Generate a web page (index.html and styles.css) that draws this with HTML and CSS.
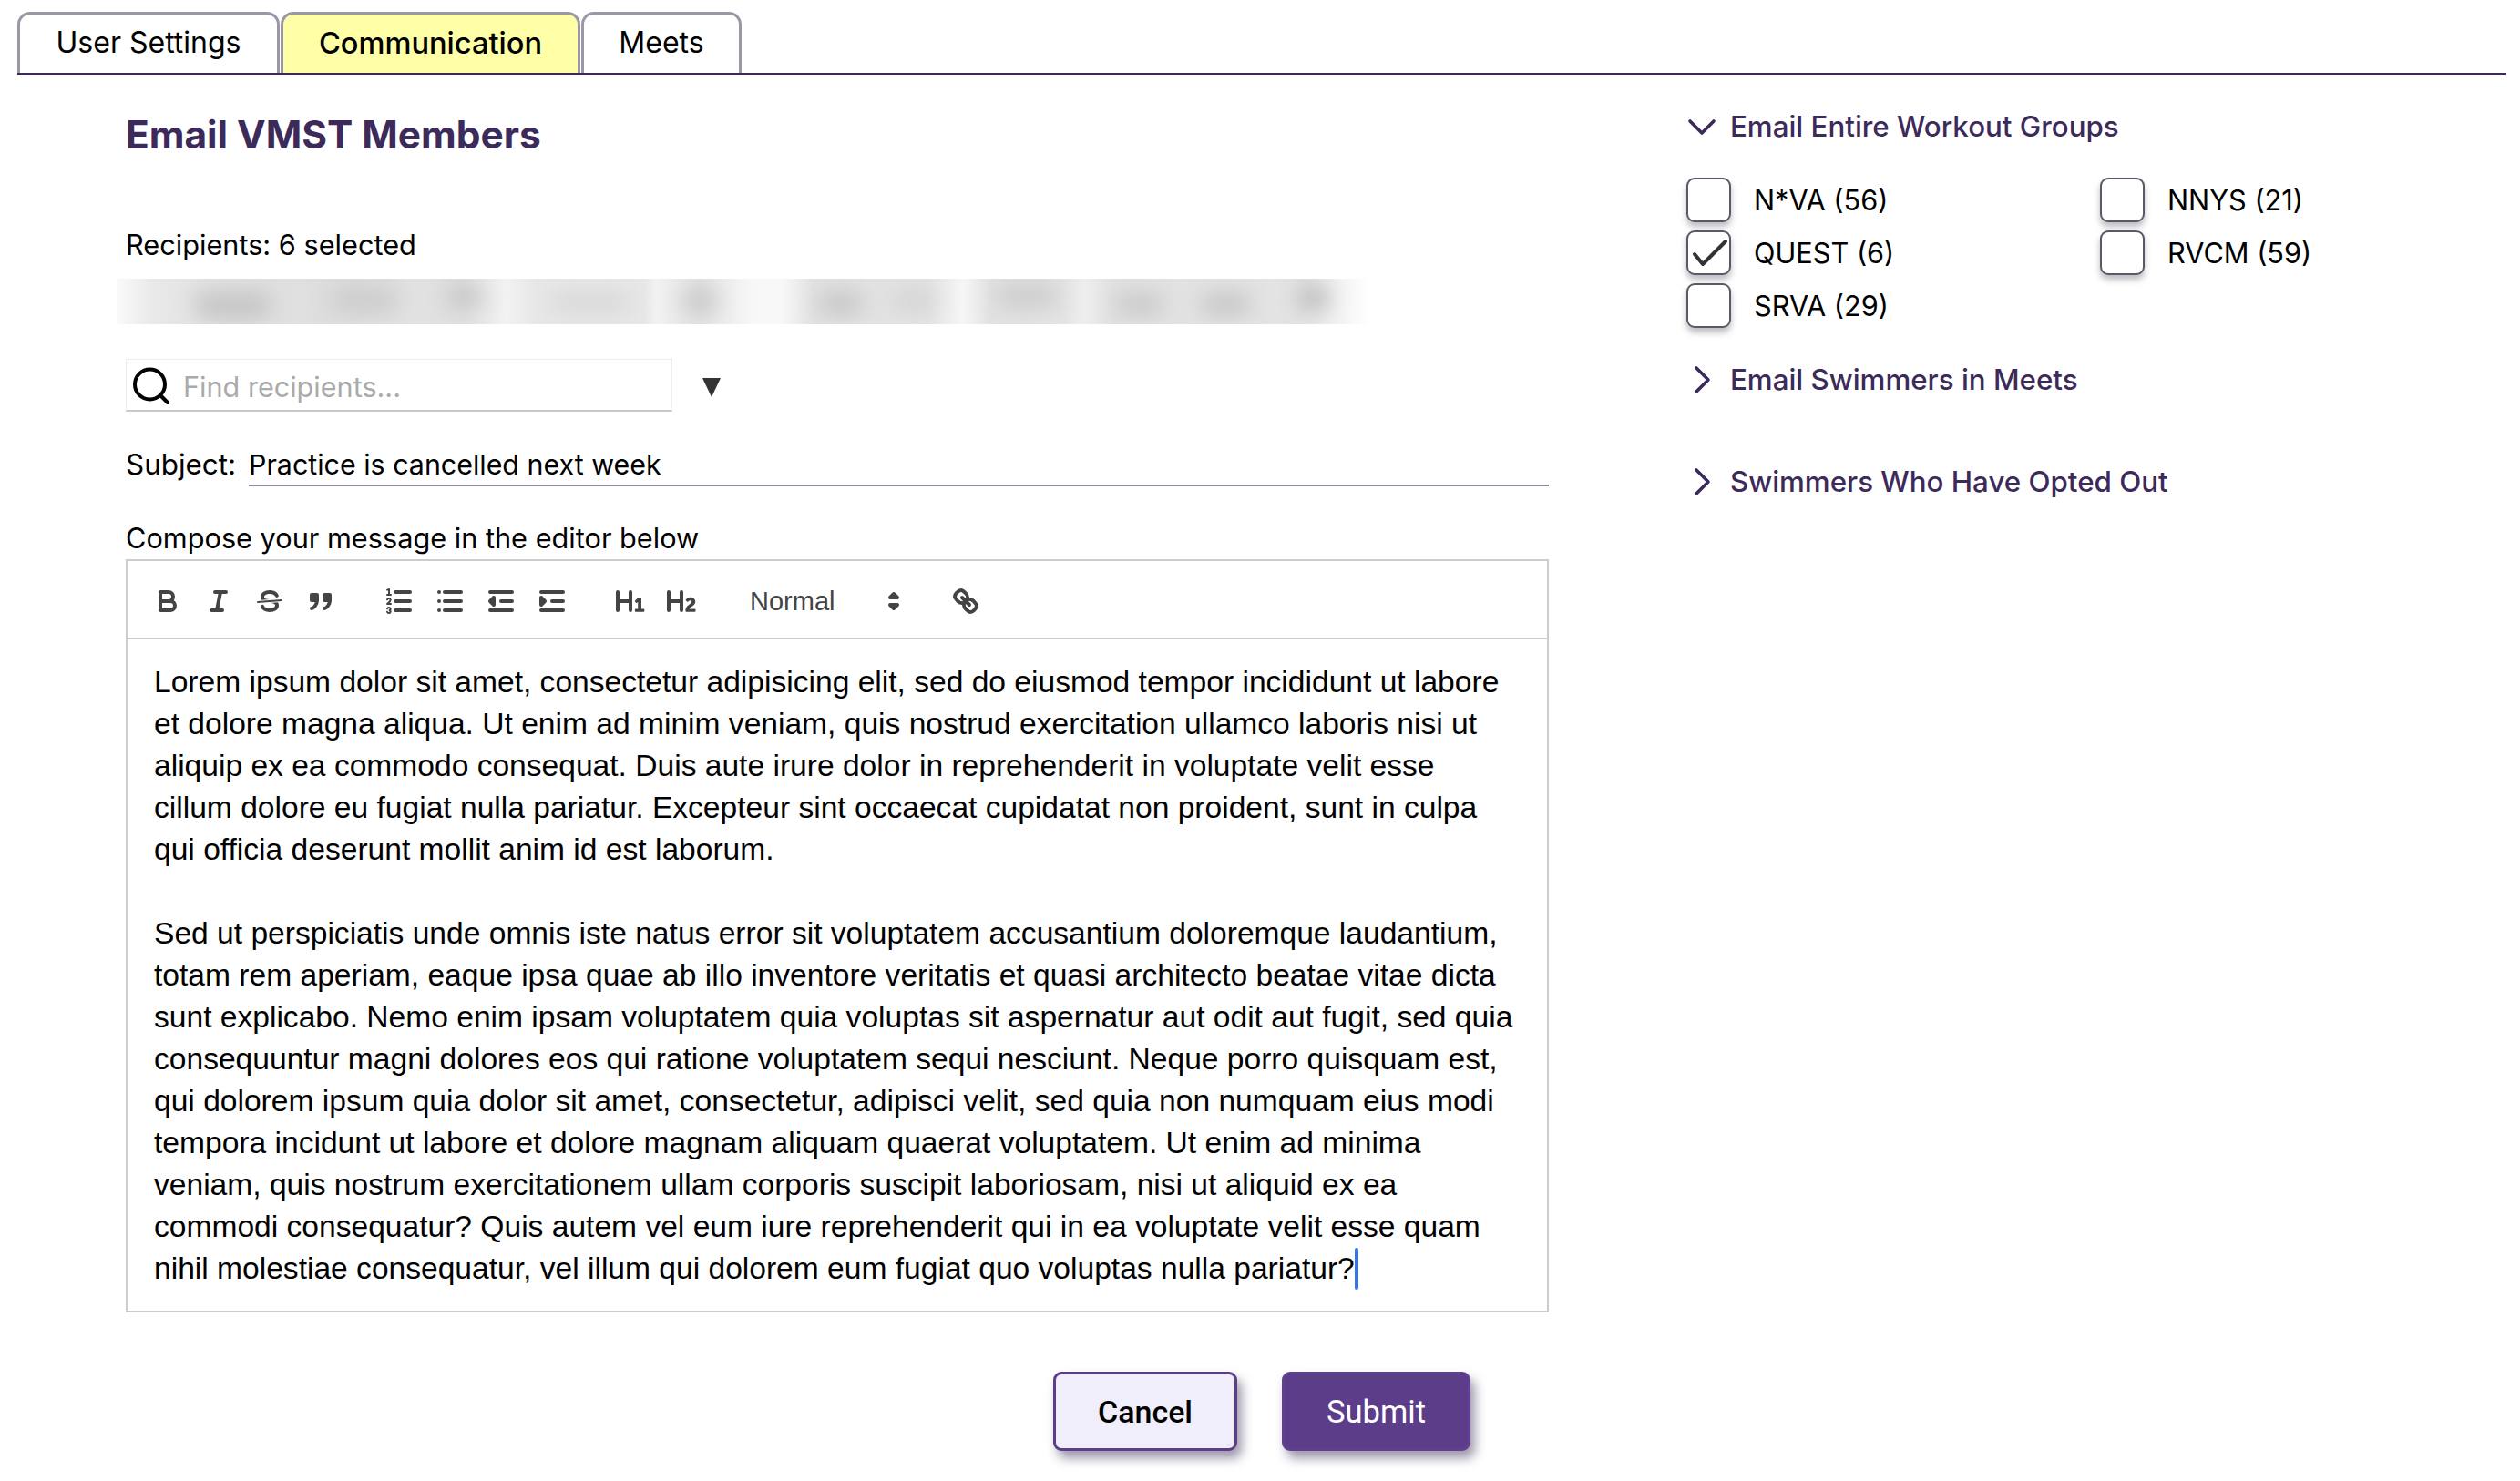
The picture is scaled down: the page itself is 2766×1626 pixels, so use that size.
FILE: index.html
```html
<!DOCTYPE html>
<html lang="en">
<head>
<meta charset="utf-8">
<title>Email VMST Members</title>
<link rel="stylesheet" href="styles.css">
</head>
<body>
<nav class="tabs">
  <a class="tab tab-settings">User Settings</a>
  <a class="tab tab-active">Communication</a>
  <a class="tab tab-meets">Meets</a>
</nav>
<main class="page">
  <section class="compose">
    <h1 class="title">Email VMST Members</h1>
    <p class="recipients">Recipients: 6 selected</p>
    <div class="blurred" aria-hidden="true">
      <i class="blob b1"></i><i class="blob b2"></i><i class="blob b3"></i><i class="blob b4"></i><i class="blob b5"></i><i class="blob b6"></i><i class="blob b7"></i><i class="blob b8"></i><i class="blob b9"></i><i class="blob b10"></i><i class="blob b11"></i>
    </div>
    <div class="find-row">
      <div class="find">
        <svg class="find-icon" viewBox="0 0 44 44"><circle cx="19.5" cy="21" r="16.5" fill="none" stroke="#000" stroke-width="4"/><path d="M31 33l8 8" stroke="#000" stroke-width="4" stroke-linecap="round"/></svg>
        <span class="find-text">Find recipients...</span>
      </div>
      <span class="find-arrow"></span>
    </div>
    <div class="subject">
      <span class="subject-label">Subject:</span>
      <span class="subject-value">Practice is cancelled next week</span>
    </div>
    <p class="compose-label">Compose your message in the editor below</p>
    <div class="editor">
      <div class="toolbar">
        <div class="group">
          <span class="btn"><svg viewBox="0 0 18 18"><path class="st" d="M5,4H9.5A2.5,2.5,0,0,1,12,6.5v0A2.5,2.5,0,0,1,9.5,9H5A0,0,0,0,1,5,9V4A0,0,0,0,1,5,4Z"/><path class="st" d="M5,9h5.5A2.5,2.5,0,0,1,13,11.5v0A2.5,2.5,0,0,1,10.5,14H5a0,0,0,0,1,0,0V9A0,0,0,0,1,5,9Z"/></svg></span>
          <span class="btn"><svg viewBox="0 0 18 18"><line class="st" x1="7" x2="13" y1="4" y2="4"/><line class="st" x1="5" x2="11" y1="14" y2="14"/><line class="st" x1="8" x2="10" y1="14" y2="4"/></svg></span>
          <span class="btn"><svg viewBox="0 0 18 18"><line class="st thin" x1="15.5" x2="2.5" y1="8.5" y2="9.5"/><path class="fl" d="M9.007,8C6.542,7.791,6,7.519,6,6.5,6,5.792,7.283,5,9,5c1.571,0,2.765.679,2.969,1.309a1,1,0,0,0,1.9-.617C13.356,4.106,11.354,3,9,3,6.2,3,4,4.538,4,6.5a3.2,3.2,0,0,0,.5,1.843Z"/><path class="fl" d="M8.984,10C11.457,10.208,12,10.479,12,11.5c0,.708-1.283,1.5-3,1.5-1.571,0-2.765-.679-2.969-1.309a1,1,0,1,0-1.9.617C4.644,13.894,6.646,15,9,15c2.8,0,5-1.538,5-3.5a3.2,3.2,0,0,0-.5-1.843Z"/></svg></span>
          <span class="btn"><svg viewBox="0 0 18 18"><rect class="fl st" height="3" width="3" x="4" y="5.5"/><rect class="fl st" height="3" width="3" x="11" y="5.5"/><path class="st" d="M7,8.5c0,2.5-2,4.5-3,4.5"/><path class="st" d="M14,8.5c0,2.5-2,4.5-3,4.5"/></svg></span>
        </div>
        <div class="group">
          <span class="btn"><svg viewBox="0 0 18 18"><line class="st" x1="7" x2="15" y1="4" y2="4"/><line class="st" x1="7" x2="15" y1="9" y2="9"/><line class="st" x1="7" x2="15" y1="14" y2="14"/><line class="st thin" x1="2.5" x2="4.5" y1="5.5" y2="5.5"/><path class="fl" d="M3.5,6A0.5,0.5,0,0,1,3,5.5V3.085l-0.276.138A0.5,0.5,0,0,1,2.053,3c-0.124-.247-0.023-0.324.224-0.447l1-.5A0.5,0.5,0,0,1,4,2.5v3A0.5,0.5,0,0,1,3.5,6Z"/><path class="st thin" d="M4.5,10.5h-2c0-.234,1.85-1.076,1.85-2.234A0.959,0.959,0,0,0,2.5,8.156"/><path class="st thin" d="M2.5,14.846a0.959,0.959,0,0,0,1.85-.109A0.7,0.7,0,0,0,3.75,14a0.688,0.688,0,0,0,.6-0.736,0.959,0.959,0,0,0-1.85-.109"/></svg></span>
          <span class="btn"><svg viewBox="0 0 18 18"><line class="st" x1="6" x2="15" y1="4" y2="4"/><line class="st" x1="6" x2="15" y1="9" y2="9"/><line class="st" x1="6" x2="15" y1="14" y2="14"/><line class="st" x1="3" x2="3" y1="4" y2="4"/><line class="st" x1="3" x2="3" y1="9" y2="9"/><line class="st" x1="3" x2="3" y1="14" y2="14"/></svg></span>
          <span class="btn"><svg viewBox="0 0 18 18"><line class="st" x1="3" x2="15" y1="14" y2="14"/><line class="st" x1="3" x2="15" y1="4" y2="4"/><line class="st" x1="9" x2="15" y1="9" y2="9"/><polyline class="fl st" points="5 7 5 11 3 9 5 7"/></svg></span>
          <span class="btn"><svg viewBox="0 0 18 18"><line class="st" x1="3" x2="15" y1="14" y2="14"/><line class="st" x1="3" x2="15" y1="4" y2="4"/><line class="st" x1="9" x2="15" y1="9" y2="9"/><polyline class="fl st" points="3 7 3 11 5 9 3 7"/></svg></span>
        </div>
        <div class="group">
          <span class="btn"><svg viewBox="0 0 18 18"><path class="fl" d="M10,4V14a1,1,0,0,1-2,0V10H3v4a1,1,0,0,1-2,0V4A1,1,0,0,1,3,4V8H8V4a1,1,0,0,1,2,0Zm6.06787,9.209H14.98975V7.59863a.54085.54085,0,0,0-.605-.60547h-.62744a1.01119,1.01119,0,0,0-.748.29688L11.645,8.56641a.5435.5435,0,0,0-.022.8584l.28613.30762a.53861.53861,0,0,0,.84717.0332l.09912-.08789a1.2137,1.2137,0,0,0,.2417-.35254h.02246s-.01123.30859-.01123.60547V13.209H12.041a.54085.54085,0,0,0-.605.60547v.43945a.54085.54085,0,0,0,.605.60547h4.02686a.54085.54085,0,0,0,.605-.60547v-.43945A.54085.54085,0,0,0,16.06787,13.209Z"/></svg></span>
          <span class="btn"><svg viewBox="0 0 18 18"><path class="fl" d="M16.73975,13.81445v.43945a.54085.54085,0,0,1-.605.60547H11.855a.58392.58392,0,0,1-.64893-.60547V14.0127c0-2.90527,3.39941-3.42187,3.39941-4.55469a.77675.77675,0,0,0-.84717-.78125,1.17684,1.17684,0,0,0-.83594.38477c-.2749.26367-.561.374-.85791.13184l-.4292-.34082c-.30811-.24219-.38525-.51758-.1543-.81445a2.97155,2.97155,0,0,1,2.45361-1.17676,2.45393,2.45393,0,0,1,2.68408,2.40918c0,2.45312-3.1792,2.92676-3.27832,3.93848h2.79443A.54085.54085,0,0,1,16.73975,13.81445ZM9,3A.99974.99974,0,0,0,8,4V8H3V4A1,1,0,0,0,1,4V14a1,1,0,0,0,2,0V10H8v4a1,1,0,0,0,2,0V4A.99974.99974,0,0,0,9,3Z"/></svg></span>
        </div>
        <div class="group">
          <span class="picker">Normal<svg viewBox="0 0 18 18"><polygon class="fl st" points="7 11 9 13 11 11 7 11"/><polygon class="fl st" points="7 7 9 5 11 7 7 7"/></svg></span>
        </div>
        <div class="group">
          <span class="btn"><svg viewBox="0 0 18 18"><line class="st" x1="7" x2="11" y1="7" y2="11"/><path class="st" d="M8.9,4.577a3.476,3.476,0,0,1,.36,4.679A3.476,3.476,0,0,1,4.577,8.9C3.185,7.5,2.035,6.4,4.217,4.217S7.5,3.185,8.9,4.577Z"/><path class="st" d="M13.423,9.1a3.476,3.476,0,0,0-4.679-.36,3.476,3.476,0,0,0,.36,4.679c1.392,1.392,2.5,2.542,4.679.36S14.815,10.5,13.423,9.1Z"/></svg></span>
        </div>
      </div>
      <div class="content">
        <p>Lorem ipsum dolor sit amet, consectetur adipisicing elit, sed do eiusmod tempor incididunt ut labore<br>et dolore magna aliqua. Ut enim ad minim veniam, quis nostrud exercitation ullamco laboris nisi ut<br>aliquip ex ea commodo consequat. Duis aute irure dolor in reprehenderit in voluptate velit esse<br>cillum dolore eu fugiat nulla pariatur. Excepteur sint occaecat cupidatat non proident, sunt in culpa<br>qui officia deserunt mollit anim id est laborum.</p>
        <p class="blank"><br></p>
        <p>Sed ut perspiciatis unde omnis iste natus error sit voluptatem accusantium doloremque laudantium,<br>totam rem aperiam, eaque ipsa quae ab illo inventore veritatis et quasi architecto beatae vitae dicta<br>sunt explicabo. Nemo enim ipsam voluptatem quia voluptas sit aspernatur aut odit aut fugit, sed quia<br>consequuntur magni dolores eos qui ratione voluptatem sequi nesciunt. Neque porro quisquam est,<br>qui dolorem ipsum quia dolor sit amet, consectetur, adipisci velit, sed quia non numquam eius modi<br>tempora incidunt ut labore et dolore magnam aliquam quaerat voluptatem. Ut enim ad minima<br>veniam, quis nostrum exercitationem ullam corporis suscipit laboriosam, nisi ut aliquid ex ea<br>commodi consequatur? Quis autem vel eum iure reprehenderit qui in ea voluptate velit esse quam<br>nihil molestiae consequatur, vel illum qui dolorem eum fugiat quo voluptas nulla pariatur?<span class="caret"></span></p>
      </div>
    </div>
    <div class="actions">
      <button class="action cancel">Cancel</button>
      <button class="action submit">Submit</button>
    </div>
  </section>
  <aside class="side">
    <div class="acc acc-open">
      <svg class="chev" viewBox="0 0 32 32"><path d="M3 10l13 13 13-13" /></svg>
      <span>Email Entire Workout Groups</span>
    </div>
    <div class="checks">
      <label class="check"><span class="box"></span>N*VA (56)</label>
      <label class="check"><span class="box"></span>NNYS (21)</label>
      <label class="check"><span class="box"><svg viewBox="0 0 45 45"><path d="M7 24l9 11L41 10"/></svg></span>QUEST (6)</label>
      <label class="check"><span class="box"></span>RVCM (59)</label>
      <label class="check"><span class="box"></span>SRVA (29)</label>
    </div>
    <div class="acc acc-meets">
      <svg class="chev" viewBox="0 0 32 32"><path d="M10 3l13 13-13 13"/></svg>
      <span>Email Swimmers in Meets</span>
    </div>
    <div class="acc acc-opted">
      <svg class="chev" viewBox="0 0 32 32"><path d="M10 3l13 13-13 13"/></svg>
      <span>Swimmers Who Have Opted Out</span>
    </div>
  </aside>
</main>
</body>
</html>
```
FILE: styles.css
```css
* { box-sizing: border-box; }
html, body { margin: 0; padding: 0; background: #fff; }
body { width: 2766px; height: 1626px; overflow: hidden; font-family: Inter, sans-serif; font-size: 30.7px; color: #000; }
p, h1 { margin: 0; }

.tabs { display: flex; gap: 1px; height: 82px; margin: 0 15px 0 19px; padding-top: 13px; border-bottom: 2px solid #3c2a5a; }
.tab { display: flex; align-items: center; justify-content: center; padding-bottom: 3px; border: 3px solid #9a98a6; border-bottom: 0; border-radius: 14px 14px 0 0; height: 67px; font-size: 32px; }
.tab-settings { width: 288px; }
.tab-active { width: 329px; background: #ffffa8; font-weight: 500; font-size: 32.6px; }
.tab-meets { width: 176px; }

.page { display: flex; }
.compose { width: 1562px; margin-left: 138px; }
.title { margin-top: 40px; font-size: 42.4px; line-height: 52px; font-weight: 700; color: #3c2a5a; }
.recipients { margin-top: 73px; line-height: 44px; }

.blurred { position: relative; width: 1380px; height: 50px; margin: 15px 0 0 -10px; overflow: hidden; background: linear-gradient(90deg, #fafafa 0, #e9e9e9 40px, #e4e4e4 90px, #dedede 230px, #e2e2e2 320px, #e0e0e0 380px, #f2f2f2 427px, #e8e8e8 460px, #e8e8e8 580px, #f2f2f2 592px, #e4e4e4 640px, #f8f8f8 700px, #f8f8f8 730px, #e2e2e2 765px, #e4e4e4 890px, #f6f6f6 929px, #e2e2e2 960px, #e4e4e4 1036px, #eeeeee 1062px, #e2e2e2 1094px, #e4e4e4 1300px, #fff 1375px); }
.blob { position: absolute; border-radius: 14px; filter: blur(12px); }
.b1 { left: 85px; top: 14px; width: 85px; height: 30px; background: #c4c4c4; }
.b2 { left: 235px; top: 8px; width: 75px; height: 30px; background: #cccccc; }
.b3 { left: 362px; top: 8px; width: 40px; height: 24px; background: #c4c4c4; }
.b4 { left: 475px; top: 14px; width: 90px; height: 24px; background: #d8d8d8; }
.b5 { left: 620px; top: 10px; width: 40px; height: 28px; background: #c8c8c8; }
.b6 { left: 770px; top: 14px; width: 50px; height: 26px; background: #c6c6c6; }
.b7 { left: 850px; top: 10px; width: 50px; height: 26px; background: #d4d4d4; }
.b8 { left: 965px; top: 6px; width: 70px; height: 26px; background: #cccccc; }
.b9 { left: 1095px; top: 16px; width: 55px; height: 24px; background: #c8c8c8; }
.b10 { left: 1190px; top: 16px; width: 55px; height: 24px; background: #c4c4c4; }
.b11 { left: 1296px; top: 6px; width: 35px; height: 30px; background: #bcbcbc; }

.find-row { display: flex; align-items: center; margin-top: 38px; }
.find { display: flex; align-items: center; width: 600px; height: 58px; border: 1px solid #eeeeee; border-bottom: 2px solid #c8c8cc; }
.find-icon { width: 44px; height: 44px; margin-left: 6px; }
.find-text { margin: 3px 0 0 12px; font-size: 30.6px; color: #aaa; }
.find-arrow { width: 0; height: 0; margin: 4px 0 0 33px; border-style: solid; border-width: 21px 10.5px 0; border-color: #333 transparent transparent; }

.subject { display: flex; align-items: flex-end; height: 60px; margin-top: 22px; }
.subject-label { width: 135px; line-height: 48px; font-size: 31.4px; }
.subject-value { flex: 1; padding-top: 2px; line-height: 44px; height: 48px; border-bottom: 2px solid #8a8a9a; font-size: 30.4px; }

.compose-label { margin-top: 35px; line-height: 44px; }

.editor { width: 1562px; height: 827px; margin-top: 1px; border: 2px solid #ccc; }
.toolbar { display: flex; align-items: center; height: 86px; padding: 4px 16px 0; border-bottom: 2px solid #ccc; }
.group { display: flex; margin-right: 30px; }
.btn { display: block; width: 56px; height: 48px; padding: 6px 10px; }
.btn svg, .picker svg { display: block; width: 36px; height: 36px; }
.st { fill: none; stroke: #444; stroke-width: 2; stroke-linecap: round; stroke-linejoin: round; }
.thin { stroke-width: 1; }
.fl { fill: #444; }
.picker { display: flex; align-items: center; justify-content: space-between; width: 196px; height: 48px; padding: 0 3px 0 17px; font-family: "Liberation Sans", sans-serif; font-size: 29px; color: #444; }
.content { padding: 24px 29px; font-family: "Liberation Sans", sans-serif; font-size: 33.6px; line-height: 46px; white-space: nowrap; }
.caret { display: inline-block; width: 4px; height: 46px; border-radius: 2px; background: #3a72ee; vertical-align: -12px; }

.actions { display: flex; justify-content: flex-start; gap: 49px; margin: 65px 0 0 1018px; }
.action { height: 87px; border-radius: 9px; font-family: Roboto, sans-serif; font-size: 34px; font-weight: 500; box-shadow: 5px 8px 12px rgba(60, 50, 90, .5); }
.cancel { width: 202px; background: #f0eefa; border: 3px solid #5c3d8a; color: #000; }
.submit { width: 207px; background: #5c3d89; border: 3px solid #61418f; color: #fff; font-size: 34.6px; font-weight: 400; }

.side { margin-left: 151px; width: 720px; }
.acc { display: flex; align-items: center; height: 44px; font-size: 31.3px; font-weight: 500; color: #3c2a5a; }
.acc-open { margin-top: 35px; }
.chev { width: 32px; height: 32px; margin-left: 1px; margin-right: 15px; flex: none; }
.chev path { fill: none; stroke: #3c2a5a; stroke-width: 3.6; stroke-linecap: round; stroke-linejoin: round; }
.checks { display: grid; grid-template-columns: 454px 1fr; grid-auto-rows: 58px; margin-top: 29px; }
.check { display: flex; align-items: center; }
.box { display: block; width: 49px; height: 49px; margin-right: 25px; background: #fff; border: 2px solid #5a5a66; border-radius: 9px; box-shadow: 0 5px 7px rgba(60, 60, 80, .35); }
.box svg { display: block; width: 45px; height: 45px; }
.box path { fill: none; stroke: #333; stroke-width: 4; stroke-linecap: round; stroke-linejoin: round; }
.acc-meets { margin-top: 31px; }
.acc-opted { margin-top: 68px; }
```
